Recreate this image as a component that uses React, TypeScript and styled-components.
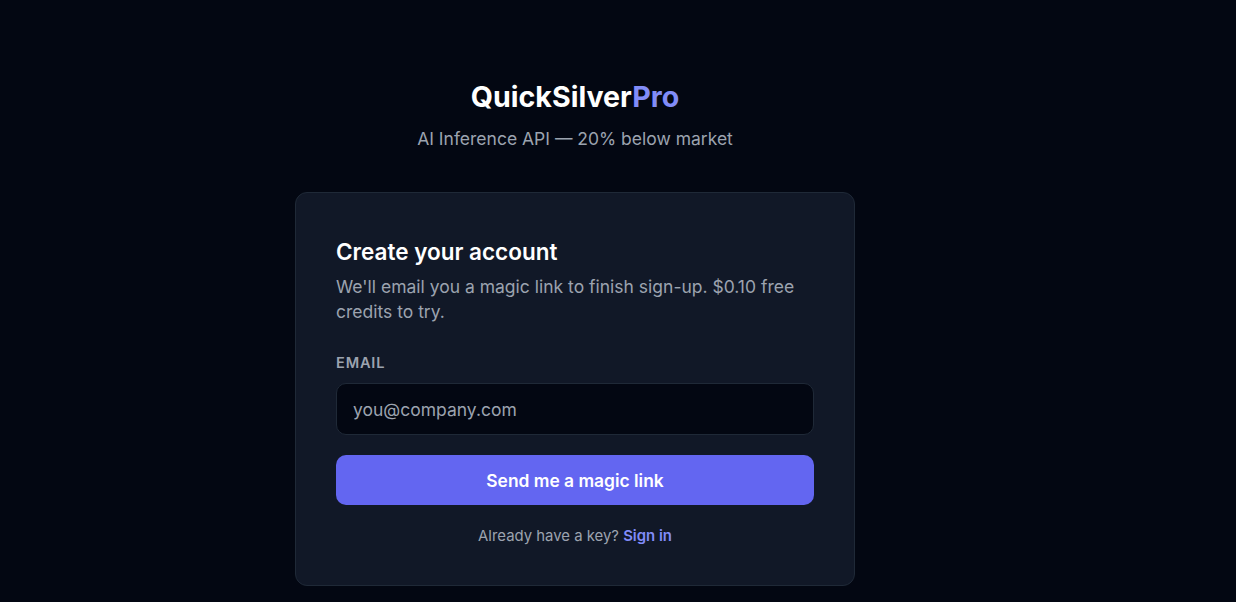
import styled, { createGlobalStyle } from 'styled-components'

const GlobalStyle = createGlobalStyle`
  html, body {
    margin: 0;
    padding: 0;
    background: #030712;
    font-family: Inter, "Noto Sans", sans-serif;
    -webkit-font-smoothing: antialiased;
  }
  * {
    box-sizing: border-box;
  }
`

const Page = styled.main`
  min-height: 100vh;
  display: flex;
  flex-direction: column;
  align-items: center;
  padding: 80px 86px 40px 0;
`

const Brand = styled.h1`
  margin: 0;
  font-size: 28.6px;
  line-height: 34px;
  font-weight: 700;
  letter-spacing: 0;
  color: #ffffff;

  span {
    color: #818cf8;
  }
`

const Tagline = styled.p`
  margin: 12px 0 0;
  font-size: 17.5px;
  line-height: 26px;
  color: #9ca3af;
`

const Card = styled.section`
  margin-top: 40px;
  width: 560px;
  padding: 44px 40px 39px;
  background: #111827;
  border: 1px solid #1f2937;
  border-radius: 12px;
`

const Title = styled.h2`
  margin: 0;
  font-size: 22.5px;
  line-height: 30px;
  font-weight: 600;
  color: #ffffff;
`

const Lead = styled.p`
  margin: 7px 0 0;
  font-size: 17.5px;
  line-height: 25px;
  color: #9ca3af;
`

const Label = styled.label`
  display: block;
  margin-top: 29px;
  font-size: 14.6px;
  line-height: 20px;
  font-weight: 600;
  letter-spacing: 0.8px;
  text-transform: uppercase;
  color: #9ca3af;
`

const Input = styled.input`
  display: block;
  width: 100%;
  height: 52px;
  margin-top: 10px;
  padding: 0 16px;
  background: #030712;
  border: 1px solid #1f2937;
  border-radius: 10px;
  font-family: inherit;
  font-size: 17.5px;
  color: #f3f4f6;
  outline: none;

  &::placeholder {
    color: #9ca3af;
  }
`

const Button = styled.button`
  display: block;
  width: 100%;
  height: 50px;
  margin-top: 20px;
  border: none;
  border-radius: 10px;
  background: #6366f1;
  font-family: inherit;
  font-size: 17.4px;
  font-weight: 600;
  color: #ffffff;
  cursor: pointer;
`

const Footer = styled.p`
  margin: 21px 0 0;
  text-align: center;
  font-size: 14.9px;
  line-height: 20px;
  color: #9ca3af;

  a {
    color: #818cf8;
    font-weight: 600;
    text-decoration: none;
  }
`

const App = () => {
  return (
    <>
      <GlobalStyle />
      <Page>
        <Brand>
          QuickSilver<span>Pro</span>
        </Brand>
        <Tagline>AI Inference API — 20% below market</Tagline>
        <Card>
          <Title>Create your account</Title>
          <Lead>
            We'll email you a magic link to finish sign-up. $0.10 free credits
            to try.
          </Lead>
          <Label htmlFor="email">Email</Label>
          <Input id="email" type="email" placeholder="you@company.com" />
          <Button type="button">Send me a magic link</Button>
          <Footer>
            Already have a key? <a href="#">Sign in</a>
          </Footer>
        </Card>
      </Page>
    </>
  )
}

export default App
